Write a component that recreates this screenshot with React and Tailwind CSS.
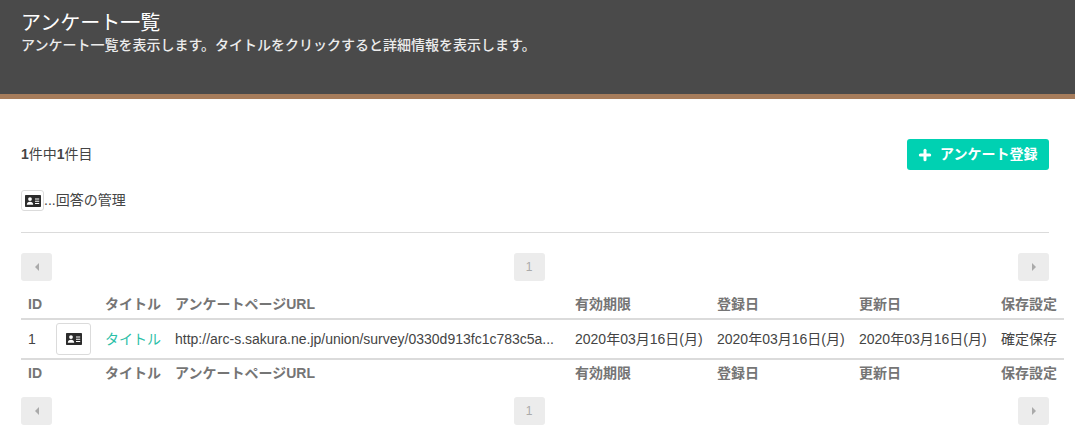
import React from 'react';
import { Plus } from 'lucide-react';

const font = 'font-["Liberation_Sans","Noto_Sans_CJK_JP",sans-serif]';

const IdCard = ({ className }) => (
  <svg viewBox="0 0 16 12" className={className} fill="currentColor">
    <path
      fillRule="evenodd"
      d="M1 0h14c.6 0 1 .4 1 1v10c0 .6-.4 1-1 1H1c-.6 0-1-.4-1-1V1c0-.6.4-1 1-1ZM5 2.200a1.900 1.900 0 1 0 0 3.800 1.900 1.900 0 0 0 0-3.800ZM1.800 9.800h6.400c0-1.900-1.300-3.100-3.200-3.100s-3.200 1.200-3.200 3.100ZM10 3.500v1.100h4.200V3.500H10Zm0 2.200v1.100h4.200V5.700H10Zm0 2.200V9h4.200V7.900H10Z"
    />
  </svg>
);

const PageBtn = ({ children, dir, className = '' }) => (
  <button className={`w-[31px] h-[28px] flex items-center justify-center rounded-[3px] bg-[#ececec] text-[12px] text-[#aaaaaa] ${className}`}>
    {dir === 'left' && <span className="border-y-[4px] border-r-[4px] border-y-transparent border-r-[#aaaaaa]" />}
    {dir === 'right' && <span className="border-y-[4px] border-l-[4px] border-y-transparent border-l-[#aaaaaa]" />}
    {children}
  </button>
);

const Pager = () => (
  <div className="flex justify-between">
    <PageBtn dir="left" />
    <PageBtn className="mr-[12px]">1</PageBtn>
    <PageBtn dir="right" />
  </div>
);

const headers = ['ID', '', 'タイトル', 'アンケートページURL', '有効期限', '登録日', '更新日', '保存設定'];
const date = '2020年03月16日(月)';

const HeadRow = ({ className }) => (
  <tr className={className}>
    {headers.map((h, idx) => (
      <th key={idx} className="px-[7px] text-left text-[14px] font-bold text-[#757575] whitespace-nowrap">
        {h}
      </th>
    ))}
  </tr>
);

export default function App() {
  return (
    <div className={`${font} w-[1075px] h-[433px] overflow-hidden bg-white`}>
      <header className="h-[99px] bg-[#4a4a4a] border-b-[5px] border-[#a67c5b] px-[21px] pt-[10px]">
        <h1 className="text-[20px] leading-[26px] text-white">アンケート一覧</h1>
        <p className="text-[14px] leading-[18px] font-medium text-[#ececec]">
          アンケート一覧を表示します。タイトルをクリックすると詳細情報を表示します。
        </p>
      </header>

      <main className="px-[21px] w-[1070px]">
        <div className="w-[1028px]">
          <div className="flex items-center justify-between mt-[40px] h-[31px]">
            <p className="text-[14px] text-[#444444]">
              <b>1</b>件中<b>1</b>件目
            </p>
            <button className="h-[31px] w-[142px] flex items-center pl-[10px] gap-[7px] rounded-[3px] bg-[#00d1b2] text-[14px] font-bold text-white">
              <Plus size={16} strokeWidth={4.5} absoluteStrokeWidth={false} />
              アンケート登録
            </button>
          </div>

          <div className="flex items-center mt-[20px] h-[21px] text-[14px] text-[#444444]">
            <span className="w-[23px] h-[21px] flex items-center justify-center rounded-[3px] border border-[#dbdbdb] text-[#2b2b2b]">
              <IdCard className="w-[16px] h-[12px]" />
            </span>
            ...回答の管理
          </div>

          <hr className="mt-[21px] border-[#dbdbdb]" />

          <div className="mt-[20px]">
            <Pager />
          </div>
        </div>

        <table className="table-fixed w-[1043px] mt-[9px] border-collapse">
          <colgroup>
            <col className="w-[28px]" />
            <col className="w-[49px]" />
            <col className="w-[70px]" />
            <col className="w-[400px]" />
            <col className="w-[142px]" />
            <col className="w-[142px]" />
            <col className="w-[142px]" />
            <col className="w-[70px]" />
          </colgroup>
          <thead>
            <HeadRow className="h-[29px] border-b-2 border-[#dbdbdb]" />
          </thead>
          <tbody>
            <tr className="h-[40px] border-b-2 border-[#dbdbdb] text-[14px] text-[#444444]">
              <td className="px-[7px]">1</td>
              <td className="px-[7px]">
                <button className="w-[35px] h-[32px] flex items-center justify-center rounded-[3px] border border-[#dbdbdb] text-[#2b2b2b]">
                  <IdCard className="w-[16px] h-[12px]" />
                </button>
              </td>
              <td className="px-[7px] text-[#2cc0a8] whitespace-nowrap">タイトル</td>
              <td className="px-[7px] whitespace-nowrap overflow-hidden">
                http://arc-s.sakura.ne.jp/union/survey/0330d913fc1c783c5a...
              </td>
              <td className="px-[7px] whitespace-nowrap">{date}</td>
              <td className="px-[7px] whitespace-nowrap">{date}</td>
              <td className="px-[7px] whitespace-nowrap">{date}</td>
              <td className="px-[7px] whitespace-nowrap">確定保存</td>
            </tr>
          </tbody>
          <tfoot>
            <HeadRow className="h-[28px]" />
          </tfoot>
        </table>

        <div className="w-[1028px] mt-[10px]">
          <Pager />
        </div>
      </main>
    </div>
  );
}
